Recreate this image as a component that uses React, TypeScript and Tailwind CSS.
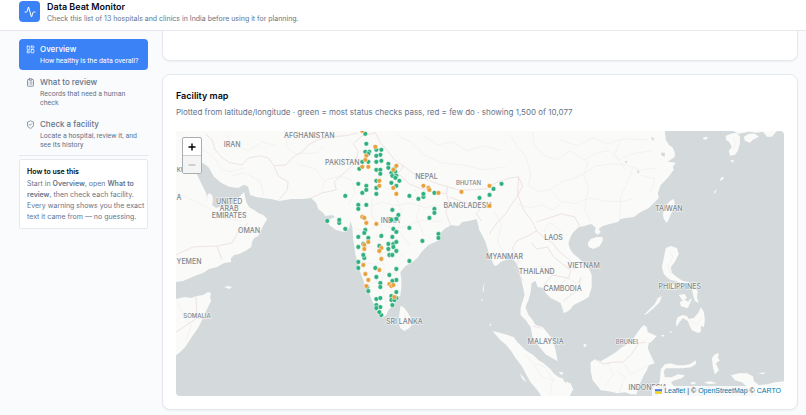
import { useState } from 'react';
import { Activity, ClipboardList, LayoutDashboard, ShieldCheck } from 'lucide-react';

const NAV_ITEMS = [
  { id: 'overview', label: 'Overview', hint: 'How healthy is the data overall?', icon: LayoutDashboard },
  { id: 'review', label: 'What to review', hint: 'Records that need a human check', icon: ClipboardList },
  { id: 'facility', label: 'Check a facility', hint: 'Locate a hospital, review it, and see its history', icon: ShieldCheck },
];

// Coastlines, in map canvas units
const LAND = [
  // Asia mainland
  'M176 131V282L183 281 190 278 197 275 203 273 209 269 217 267 224 263 231 262 231 258 234 255 239 254 243 252 247 250 251 247 252 242 254 238 258 236 261 230 264 224 267 219 263 215 258 213 254 210 249 207 246 202 245 197 244 192 241 195 237 200 233 204 229 207 222 206 216 208 212 205 213 200 212 195 209 193 207 196 208 202 206 193 201 183 196 173 193 166 199 162 204 164 209 168 211 172 214 177 221 183 229 187 238 188 244 185 248 187 250 195 256 197 263 198 271 199 279 201 285 200 291 199 302 199 311 198 314 201 316 203 318 209 323 213 325 216 332 215 335 217 330 219 327 220 329 225 336 230 344 232 349 228 350 221 352 227 353 240 354 246 355 254 357 262 360 272 363 280 365 287 369 293 371 299 373 303 378 313 382 318 386 315 388 310 393 305 396 300 400 295 401 287 401 280 400 272 405 266 411 263 417 258 421 252 428 245 437 241 440 233 445 228 450 226 460 229 468 227 475 225 478 230 480 232 485 242 488 252 492 262 494 266 497 265 500 262 505 260 510 257 515 262 518 268 520 277 522 285 524 295 520 308 520 315 525 320 530 327 532 337 536 343 540 348 545 354 550 357 557 361 556 355 555 350 553 343 550 337 547 333 542 327 535 325 532 320 528 315 525 308 526 304 528 300 530 292 531 283 535 281 537 287 543 288 545 293 550 298 556 301 560 303 562 309 563 313 566 312 570 309 573 305 577 303 583 300 588 297 591 287 591 275 589 270 585 265 578 258 573 254 570 250 568 245 568 242 570 237 572 233 578 227 584 226 590 224 592 225 595 228 594 232 597 235 600 232 598 229 602 226 609 224 617 222 620 219 625 218 633 217 640 212 648 208 653 203 658 198 657 193 660 185 663 182 667 178 670 174 673 170 672 167 675 163 667 162 674 157 674 153 672 148 668 145 665 140 664 131Z',
  // Horn of Africa
  'M176 299 185 297 191 298 197 296 203 295 208 292 211 293 210 297 211 301 208 307 205 313 202 320 198 328 193 335 185 347 180 352 176 355Z',
  'M224 287 228 286 232 287 229 289Z',
  // Sri Lanka
  'M400 306 403 307 407 312 411 319 412 324 409 328 404 331 400 328 398 322 399 314Z',
  // Sumatra
  'M492 331 500 333 507 335 513 337 517 342 521 346 525 350 533 355 538 360 543 363 549 368 553 373 558 377 562 378 564 382 570 383 572 390 569 396 541 396 536 389 530 382 526 375 522 367 516 359 510 350 505 344 500 340Z',
  // Borneo
  'M590 362 594 359 600 361 607 357 615 352 621 347 628 343 633 338 637 332 640 328 643 325 646 327 647 332 651 334 656 336 652 340 650 342 648 343 647 348 650 355 654 363 648 365 646 370 643 375 640 382 637 388 636 394 630 394 624 392 617 393 608 391 600 390 597 386 592 380 590 371Z',
  // Sulawesi
  'M660 369 664 364 670 363 676 365 683 365 689 364 695 360 695 364 690 367 682 368 673 368 665 368 663 371 664 377 671 377 677 374 684 375 681 378 674 380 670 382 675 388 680 396 658 396 656 388 659 381Z',
  // Maluku and Papua
  'M711 358 714 354 718 353 717 358 719 360 715 363 718 370 714 374 712 367Z',
  'M730 375 738 373 746 373 752 376 753 381 758 385 766 384 774 382 783 381V396H760L748 388 741 382 734 380Z',
  'M703 382 710 381 716 383 708 384ZM690 382 695 382 694 384 690 384ZM757 373 765 372 762 374Z',
  // Taiwan, Hainan
  'M662 214 665 206 669 201 673 199 674 204 671 212 668 219 666 223 663 219Z',
  'M587 243 590 239 596 237 602 237 602 241 599 246 593 249 588 247Z',
  // Luzon
  'M665 248 670 246 676 248 678 254 674 262 670 267 671 273 676 277 682 281 688 282 691 286 686 285 680 283 675 281 670 280 667 278 663 274 661 267 663 258Z',
  // Visayas
  'M678 295 684 294 686 298 682 301ZM684 300 688 302 686 308 680 306 679 302ZM689 299 691 299 687 308 685 307ZM691 287 697 291 696 297 698 303 694 301 692 294ZM670 283 675 286 672 289Z',
  // Mindanao
  'M675 322 677 317 682 315 686 316 688 319 693 318 698 312 700 307 703 312 704 320 703 327 700 326 700 332 697 333 691 330 689 326 687 321 682 318 678 323 676 327Z',
  // Palawan
  'M643 315 648 310 654 304 657 298 661 296 659 302 653 308 646 314Z',
  // Kyushu, Shikoku, Honshu
  'M725 136 730 134 736 133 739 137 739 144 737 151 734 155 729 156 728 151 731 147 728 142 725 140Z',
  'M743 137 748 134 754 134 758 137 752 140 749 143 744 141Z',
  'M732 131 738 134 748 132 756 133 762 132 766 137 771 137 776 131Z',
  // Small islands
  'M702 138 706 137 707 139 703 140ZM720 178 723 177 722 180 719 181ZM713 192 716 189 714 194ZM729 161 733 160 732 163ZM583 344 586 344 585 347 583 346ZM512 352 515 353 518 358 515 358ZM519 373 523 377 526 382 522 379ZM484 281 482 291 483 292ZM481 299 483 300 481 301ZM490 323 491 326 489 325ZM660 335 664 335 662 337ZM668 332 672 331 670 333ZM566 381 570 384 573 390 568 389ZM558 372 563 372 561 375Z',
];

const WATER = 'M447 229 450 225 458 226 462 222 468 221 476 219 478 226 479 232 470 233 458 231ZM660 153 664 153 664 157 661 156ZM650 137 654 139 652 141ZM636 170 639 172 637 174ZM624 161 627 162 625 164Z';

const BORDERS = [
  'M205 134 212 140 215 150 222 158 230 163 242 165 249 158 260 156 268 158 274 166 278 176 288 182 287 190 279 200',
  'M274 166 286 165 292 158 302 152 308 145 318 140 330 137 345 136 358 133',
  'M311 198 322 193 336 190 334 182 345 172 354 164 358 152 353 144 362 136 375 133',
  'M375 133 380 143 388 152 394 160 403 166 412 173 425 179 437 184 448 187 458 190 470 190 486 189 495 183 510 178 518 177 522 186 517 196 510 206 505 214 497 222 489 234',
  'M403 166 398 174 409 184 421 189 433 192 446 194 447 187',
  'M446 194 449 205 445 212 450 225',
  'M449 197 462 202 474 205 480 208 476 214 481 221',
  'M518 177 517 194 523 210 532 222 536 231 527 236 516 241 512 248 518 262 514 268 523 281',
  'M536 222 548 218 561 214 574 217 579 226',
  'M536 231 543 237 552 243 558 251 569 260 574 270',
  'M531 243 536 249 547 247 553 257 562 264 570 270 568 278 552 275 543 285',
  'M563 301 569 296 578 289 580 277',
  'M594 359 603 364 612 362 622 362 630 355 638 343 645 342',
  'M176 255 193 247 217 246 232 243 238 232 248 223',
  'M217 246 222 260',
  'M196 297 197 318 211 319',
  'M197 318 176 332',
  'M532 326 541 328',
];

const ROADS = [
  'M178 140 190 151 202 149 214 158 221 169 229 172 245 168',
  'M226 134 234 146 249 151 261 142 277 146',
  'M288 133 286 147 295 154 317 153 324 146',
  'M297 164 315 169 324 181 321 194',
  'M232 176 244 173 260 181 264 196',
  'M324 181 339 176 351 180 355 192 348 205',
  'M176 192 192 200 208 208 221 218 240 221',
  'M178 303 184 318 191 325 186 340',
  'M357 205 370 207 381 202 395 206 411 203 424 208 437 205',
  'M354 229 367 231 379 224 394 229 409 225 421 220 442 222',
  'M356 246 370 246 379 254 394 250 404 257',
  'M359 262 374 264 383 273 397 273',
  'M367 285 378 281 389 287 398 285',
  'M372 198 371 215 382 230 377 248 384 266 381 286 386 304',
  'M394 193 401 211 398 231 410 246',
  'M415 189 420 204 416 218 424 236',
  'M510 135 517 148 525 156 530 174 528 186 539 192 549 190 563 181 572 179',
  'M532 132 534 146 544 156 557 160 569 151 584 160 596 153 608 151 618 160 631 154 650 151',
  'M558 140 578 146 592 138 607 144 622 139 646 140',
  'M572 179 586 172 596 166 612 164 625 165 640 170 658 168',
  'M550 190 559 201 575 204 588 198 604 201 619 202 632 199',
  'M588 161 583 175 588 188 584 209 590 222',
  'M632 168 626 185 620 196 619 220',
  'M621 139 614 154 625 170',
  'M517 204 529 208 542 205 552 210 561 203',
  'M640 175 654 179 650 194',
  'M494 212 501 225 497 241 505 257',
  'M543 232 549 222 560 231 555 241',
  'M535 267 549 266 556 271',
  'M560 285 566 278 576 283 584 277',
  'M404 312 406 322 402 328',
  'M524 354 533 363 543 366 552 378 550 394',
  'M534 365 541 377 555 380',
  'M607 362 612 374 605 386',
  'M622 362 630 374 638 370 648 365',
  'M618 393 624 377 616 371',
  'M668 251 672 257 667 266 670 274',
  'M690 321 696 325 701 317',
  'M732 137 735 144 732 151',
  'M424 137 438 145 452 142 467 151 483 146 500 151',
  'M396 135 412 143 424 155 440 163 462 165 484 170 505 167',
];

const LABELS = [
  { name: 'AFGHANISTAN', x: 309, y: 138, size: 7 },
  { name: 'IRAN', x: 232, y: 147, size: 7 },
  { name: 'PAKISTAN', x: 342, y: 165, size: 7 },
  { name: 'NEPAL', x: 426, y: 179, size: 7 },
  { name: 'BHUTAN', x: 468, y: 185, size: 6 },
  { name: 'BANGLADESH', x: 467, y: 208, size: 7 },
  { name: 'INDIA', x: 390, y: 223, size: 7 },
  { name: 'UNITED', x: 229, y: 204, size: 7 },
  { name: 'ARAB', x: 229, y: 211, size: 7 },
  { name: 'EMIRATES', x: 229, y: 218, size: 7 },
  { name: 'OMAN', x: 249, y: 233, size: 7 },
  { name: 'YEMEN', x: 189, y: 264, size: 7 },
  { name: 'SOMALIA', x: 197, y: 318, size: 6 },
  { name: 'SRI LANKA', x: 404, y: 324, size: 7 },
  { name: 'MYANMAR', x: 504, y: 259, size: 7 },
  { name: 'LAOS', x: 553, y: 240, size: 7 },
  { name: 'VIETNAM', x: 583, y: 268, size: 7 },
  { name: 'THAILAND', x: 536, y: 274, size: 7 },
  { name: 'CAMBODIA', x: 562, y: 291, size: 7 },
  { name: 'TAIWAN', x: 668, y: 211, size: 7 },
  { name: 'PHILIPPINES', x: 679, y: 289, size: 7 },
  { name: 'MALAYSIA', x: 545, y: 344, size: 7 },
  { name: 'BRUNEI', x: 626, y: 344, size: 6 },
  { name: 'INDONESIA', x: 647, y: 390, size: 7 },
  { name: 'KU', x: 181, y: 172, size: 6 },
  { name: 'A', x: 179, y: 200, size: 7 },
];

const PASSING = [
  [365, 134], [366, 144], [365, 152], [369, 152], [368, 154], [362, 162], [368, 162], [359, 169], [358, 184], [366, 186],
  [366, 190], [362, 193], [345, 196], [358, 205], [366, 205], [358, 209], [381, 150], [376, 150], [380, 155], [376, 156],
  [381, 161], [376, 162], [376, 170], [380, 170], [380, 174], [376, 181], [376, 188], [376, 194], [388, 164], [388, 168],
  [394, 169], [391, 173], [395, 172], [392, 176], [396, 176], [391, 183], [396, 186], [399, 181], [395, 178], [409, 196],
  [418, 199], [423, 197], [423, 194], [434, 193], [434, 209], [434, 213], [429, 218], [479, 198], [489, 195], [493, 189],
  [501, 184], [392, 210], [398, 215], [391, 220], [396, 219], [327, 221], [339, 223], [339, 220], [345, 229], [409, 228],
  [365, 230], [364, 233], [358, 237], [368, 238], [358, 247], [363, 244], [381, 236], [393, 229], [396, 232], [392, 237],
  [438, 234], [438, 238], [422, 241], [388, 244], [393, 244], [396, 242], [379, 246], [388, 249], [393, 247], [396, 251],
  [389, 255], [392, 255], [364, 258], [363, 255], [358, 262], [358, 268], [409, 261], [396, 269], [375, 268], [376, 277],
  [389, 275], [380, 283], [380, 287], [396, 280], [392, 281], [367, 287], [368, 291], [396, 292], [376, 299], [380, 298],
  [391, 296], [396, 298], [391, 300], [394, 300], [376, 305], [380, 307], [376, 308], [392, 305], [381, 315], [379, 312],
];

const FAILING = [
  [362, 131], [375, 147], [366, 156], [365, 160], [362, 167], [368, 167], [396, 166], [379, 181], [379, 186], [393, 188],
  [396, 194], [393, 170], [423, 186], [428, 188], [429, 190], [438, 193], [461, 192], [489, 186], [489, 206], [362, 217],
  [364, 218], [366, 223], [376, 224], [364, 245], [364, 249], [368, 242], [381, 248], [379, 251], [381, 259], [363, 265],
  [379, 270], [365, 274], [368, 280], [366, 286], [389, 284], [391, 286], [393, 285], [394, 297],
];

function FacilityMap() {
  return (
    <div className="relative mt-[11px] h-[265px] overflow-hidden rounded-sm bg-[#d4dadc]">
      <svg
        viewBox="176 131 607 265"
        preserveAspectRatio="xMidYMid slice"
        className="h-full w-full"
        role="img"
        aria-label="Facility map"
      >
        {LAND.map((d) => (
          <path key={d} d={d} fill="#fafaf8" />
        ))}
        <path d={WATER} fill="#d4dadc" />
        <g fill="none" stroke="#f0ecec" strokeWidth="0.6" strokeLinejoin="round">
          {ROADS.map((d) => (
            <path key={d} d={d} />
          ))}
        </g>
        <g fill="none" stroke="#ecdcdf" strokeWidth="0.8" strokeLinejoin="round">
          {BORDERS.map((d) => (
            <path key={d} d={d} />
          ))}
        </g>
        <g
          className="font-['Inter',sans-serif] font-medium"
          fill="#7d868e"
          stroke="#fafaf8"
          strokeWidth="1"
          paintOrder="stroke"
          textAnchor="middle"
        >
          {LABELS.map((label) => (
            <text key={label.name} x={label.x} y={label.y} fontSize={label.size}>
              {label.name}
            </text>
          ))}
        </g>
        <g stroke="#fff" strokeWidth="0.5">
          {PASSING.map(([x, y], i) => (
            <circle key={i} cx={x} cy={y} r="2.4" fill="#2fb07f" />
          ))}
          {FAILING.map(([x, y], i) => (
            <circle key={i} cx={x} cy={y} r="2.4" fill="#e6a03c" />
          ))}
        </g>
      </svg>

      <div className="absolute left-[6px] top-[6px] flex flex-col overflow-hidden rounded-xs border border-[#a9aeb0] bg-white">
        <button type="button" aria-label="Zoom in" className="flex h-[18px] w-[18px] items-center justify-center border-b border-[#ccc]">
          <svg viewBox="0 0 8 8" className="h-2 w-2" stroke="#000" strokeWidth="1.4">
            <path d="M4 0.5V7.5M0.5 4H7.5" />
          </svg>
        </button>
        <button type="button" aria-label="Zoom out" disabled className="flex h-[17px] w-[18px] items-center justify-center bg-[#f4f4f4]">
          <svg viewBox="0 0 8 8" className="h-2 w-2" stroke="#aaa" strokeWidth="1.2">
            <path d="M0.5 4H7.5" />
          </svg>
        </button>
      </div>

      <div className="absolute bottom-0 right-0 flex items-center gap-[2px] bg-white/80 px-[3px] font-['Liberation_Sans',sans-serif] text-[7px] leading-[10px] text-[#333]">
        <a href="#leaflet" className="flex items-center gap-[2px] text-[#0078a8]">
          <svg viewBox="0 0 12 8" className="h-[5px] w-[7px]">
            <path fill="#4c7be1" d="M0 0h12v4H0z" />
            <path fill="#ffd500" d="M0 4h12v3H0z" />
            <path fill="#e0bc00" d="M0 7h12v1H0z" />
          </svg>
          Leaflet
        </a>
        <span>|</span>
        <span>©</span>
        <a href="#osm" className="text-[#0078a8]">OpenStreetMap</a>
        <span>©</span>
        <a href="#carto" className="text-[#0078a8]">CARTO</a>
      </div>
    </div>
  );
}

export default function App() {
  const [active, setActive] = useState('overview');

  return (
    <div className="min-h-screen bg-[#fafbfd] font-['Inter',sans-serif] text-[#64748b]">
      <header className="flex h-[31px] items-start gap-[7px] border-b border-[#e5e9ee] bg-white px-[19px] pt-px">
        <div className="flex h-[21px] w-[21px] items-center justify-center rounded-sm bg-[#3b82f6] text-white">
          <Activity size={12} strokeWidth={2} />
        </div>
        <div>
          <h1 className="text-[9px] font-semibold leading-[12px] text-[#020817]">Data Beat Monitor</h1>
          <p className="text-[7px] leading-[11px]">
            Check this list of 13 hospitals and clinics in India before using it for planning.
          </p>
        </div>
      </header>

      <div className="flex items-start gap-[14px] pl-[19px] pr-2">
        {/* Sidebar */}
        <aside className="w-[129px] shrink-0 pt-2">
          <nav className="flex flex-col gap-[2px] border-b border-[#e5e9ee] pb-px">
            {NAV_ITEMS.map((item) => {
              const Icon = item.icon;
              return (
                <button
                  key={item.id}
                  type="button"
                  onClick={() => setActive(item.id)}
                  className={`flex items-start gap-[5px] rounded-sm px-[7px] py-1 text-left ${
                    active === item.id ? 'bg-[#3b82f6] text-white' : 'text-[#64748b]'
                  }`}
                >
                  <Icon size={9} strokeWidth={2} className="mt-[2px] shrink-0" />
                  <span>
                    <span className="block text-[8px] font-medium leading-[13px]">{item.label}</span>
                    <span className="mt-px block font-['Roboto',sans-serif] text-[7px] leading-[9px]">{item.hint}</span>
                  </span>
                </button>
              );
            })}
          </nav>

          <div className="mt-[3px] rounded-xs border border-[#e5e9ee] bg-white py-[6px] pl-[7px]">
            <h2 className="text-[7px] font-semibold leading-[12px] text-[#020817]">How to use this</h2>
            <p className="text-[7px] leading-[11px]">
              Start in <strong className="font-semibold">Overview</strong>, open{' '}
              <strong className="font-semibold">What to review</strong>, then check each facility. Every warning
              shows you the exact text it came from — no guessing.
            </p>
          </div>
        </aside>

        {/* Main content */}
        <main className="min-w-0 flex-1 pb-[5px]">
          <section className="h-[30px] rounded-b-lg border border-t-0 border-[#e5e9ee] bg-white shadow-xs" />
          <section className="mt-[13px] rounded-lg border border-[#e5e9ee] bg-white p-[13px] shadow-xs">
            <h2 className="text-[9px] font-semibold leading-[16px] text-[#020817]">Facility map</h2>
            <p className="text-[8px] leading-[16px]">
              Plotted from latitude/longitude · green = most status checks pass, red = few do · showing 1,500 of 10,077
            </p>
            <FacilityMap />
          </section>
        </main>
      </div>
    </div>
  );
}
